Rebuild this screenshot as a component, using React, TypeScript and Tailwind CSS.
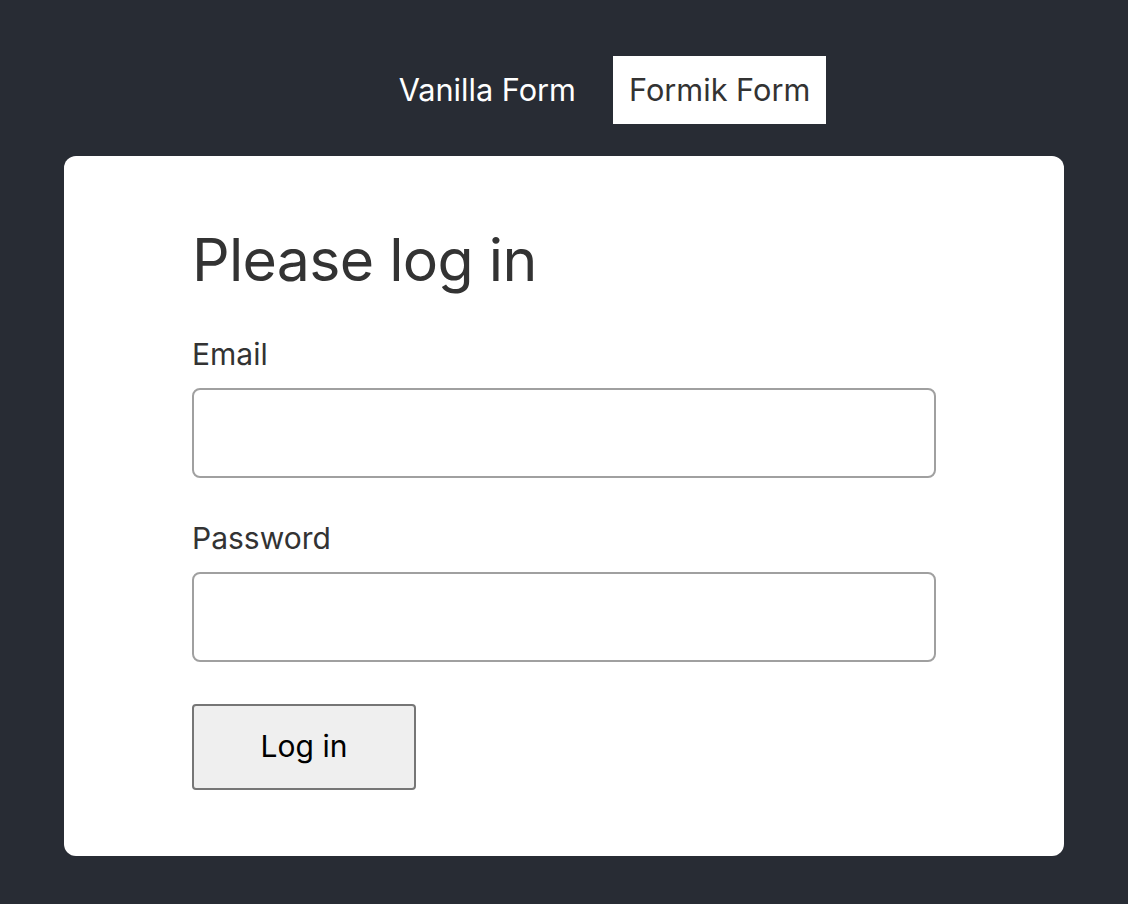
export default function App() {
  return (
    <div className="min-h-[904px] bg-[#282c34] pt-[56px] pb-[48px]" style={{ fontFamily: "Inter, 'Noto Sans', sans-serif" }}>
      <nav className="flex justify-center gap-[21px] pl-[81px]">
        <button className="h-[68px] px-[16px] text-[30.7px] text-white">Vanilla Form</button>
        <button className="h-[68px] px-[16px] text-[30.7px] text-[#333] bg-white">Formik Form</button>
      </nav>
      <div className="mx-[64px] mt-[32px] h-[700px] rounded-[12px] bg-white px-[128px] pt-[69px]">
        <h1 className="text-[59px] leading-[1.2] tracking-[-0.012em] text-[#333] mb-[40px]">Please log in</h1>
        <form className="flex flex-col">
          <label className="text-[30px] leading-[1.2] text-[#333] mb-[16px]">Email</label>
          <input className="h-[90px] w-[744px] rounded-[8px] border-2 border-[#a0a0a0] mb-[42px]" />
          <label className="text-[30px] leading-[1.2] text-[#333] mb-[16px]">Password</label>
          <input type="password" className="h-[90px] w-[744px] rounded-[8px] border-2 border-[#a0a0a0] mb-[42px]" />
          <button type="button" className="h-[86px] w-[224px] rounded-[4px] border-2 border-[#767676] bg-[#efefef] text-[30px] text-black">Log in</button>
        </form>
      </div>
    </div>
  );
}
